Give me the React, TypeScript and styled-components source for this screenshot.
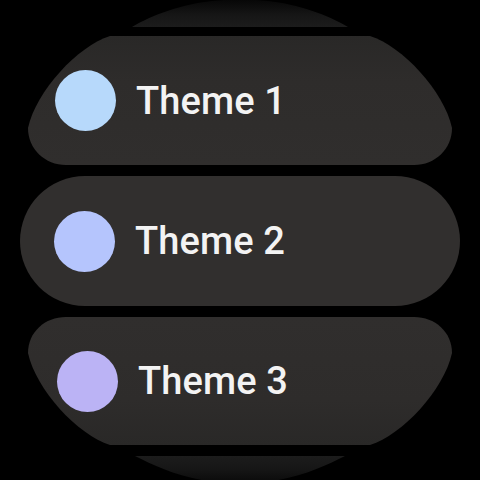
import React from "react";
import styled, { createGlobalStyle, css } from "styled-components";

const GlobalStyle = createGlobalStyle`
  html, body {
    margin: 0;
    padding: 0;
    background: #000;
  }
  #root {
    width: 480px;
    height: 480px;
  }
`;

type Shape = "top" | "middle" | "bottom";

const Screen = styled.div`
  width: 480px;
  height: 480px;
  overflow: hidden;
  background: #000;
  display: flex;
  flex-direction: column;
  align-items: center;
  gap: 11px;
  font-family: Roboto, "Noto Sans", sans-serif;
`;

const EdgePeek = styled.div<{ $side: "top" | "bottom" }>`
  flex: none;
  ${({ $side }) =>
    $side === "top"
      ? css`
          width: 216px;
          height: 27px;
          margin-bottom: -2px;
          background: linear-gradient(to bottom, #070707 0%, #161616 55%, #1c1c1c 100%);
          clip-path: path("M 0 27 C 20 15, 50 4, 80 1 Q 108 -2 136 1 C 166 4, 196 15, 216 27 Z");
        `
      : css`
          width: 210px;
          height: 30px;
          background: linear-gradient(to top, #070707 0%, #161616 55%, #1c1c1c 100%);
          clip-path: path("M 0 0 C 20 10, 45 22, 80 26 Q 105 29 130 26 C 165 22, 190 10, 210 0 Z");
        `}
`;

const cardShapes = {
  top: css`
    height: 129px;
    padding-left: 35px;
    background: linear-gradient(to bottom, #292827 0%, #2e2c2b 35%, #302e2d 100%);
    clip-path: path("M 90 0 L 350 0 C 382 10, 424 55, 432 92 C 432 113, 415 129, 394 129 L 46 129 C 25 129, 8 113, 8 92 C 16 55, 58 10, 90 0 Z");
  `,
  middle: css`
    height: 130px;
    padding-left: 34px;
    background: #312f2e;
    border-radius: 65px;
  `,
  bottom: css`
    height: 128px;
    padding-left: 37px;
    background: linear-gradient(to top, #292827 0%, #2e2c2b 35%, #302e2d 100%);
    clip-path: path("M 90 128 L 350 128 C 382 118, 424 73, 432 36 C 432 15, 415 0, 394 0 L 46 0 C 25 0, 8 15, 8 36 C 16 73, 58 118, 90 128 Z");
  `,
};

const ThemeCard = styled.div<{ $shape: Shape }>`
  flex: none;
  box-sizing: border-box;
  width: 440px;
  display: flex;
  align-items: center;
  gap: 20px;
  ${({ $shape }) => cardShapes[$shape]}
`;

const Swatch = styled.span<{ $color: string }>`
  flex: none;
  width: 61px;
  height: 61px;
  border-radius: 50%;
  background: ${({ $color }) => $color};
`;

const Label = styled.span`
  font-size: 38px;
  font-weight: 500;
  color: #f3f3f3;
  line-height: 1;
  letter-spacing: 0.1px;
`;

const themes: { name: string; color: string; shape: Shape }[] = [
  { name: "Theme 1", color: "#b7d9fb", shape: "top" },
  { name: "Theme 2", color: "#b5c5fd", shape: "middle" },
  { name: "Theme 3", color: "#bbb3f5", shape: "bottom" },
];

export default function App() {
  return (
    <>
      <GlobalStyle />
      <Screen>
        <EdgePeek $side="top" />
        {themes.map((t) => (
          <ThemeCard key={t.name} $shape={t.shape}>
            <Swatch $color={t.color} />
            <Label>{t.name}</Label>
          </ThemeCard>
        ))}
        <EdgePeek $side="bottom" />
      </Screen>
    </>
  );
}
